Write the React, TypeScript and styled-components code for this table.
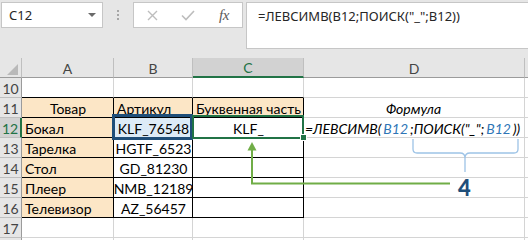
import React from "react";
import styled, { createGlobalStyle, css } from "styled-components";

const CELL_FONT = `Lato, "Liberation Sans", sans-serif`;
const UI_FONT = `"Noto Sans", "Open Sans", sans-serif`;

const GlobalStyle = createGlobalStyle`
  html, body {
    margin: 0;
    padding: 0;
  }
  body {
    width: 528px;
    height: 240px;
    overflow: hidden;
    background: #e6e6e6;
  }
`;

const Window = styled.div`
  width: 528px;
  height: 240px;
  display: flex;
  flex-direction: column;
  background: #e6e6e6;
  overflow: hidden;
`;

/* ---------- formula bar ---------- */

const FormulaBar = styled.div`
  height: 58px;
  flex: none;
  display: flex;
  align-items: flex-start;
  padding: 2px 0 0 1px;
  box-sizing: border-box;
`;

const NameBox = styled.div`
  width: 102px;
  height: 26px;
  box-sizing: border-box;
  background: #fff;
  border: 1px solid #c6c6c6;
  display: flex;
  align-items: center;
  justify-content: space-between;
  padding: 0 6px 0 7px;
  font: 13px ${UI_FONT};
  color: #262626;
`;

const DropArrow = styled.span`
  width: 0;
  height: 0;
  border-left: 4px solid transparent;
  border-right: 4px solid transparent;
  border-top: 4px solid #6a6a6a;
`;

const Grip = styled.div`
  width: 30px;
  height: 26px;
  display: flex;
  flex-direction: column;
  align-items: center;
  justify-content: center;
  gap: 2px;

  span {
    width: 2px;
    height: 2px;
    background: #a6a6a6;
  }
`;

const FxBox = styled.div`
  width: 110px;
  height: 26px;
  box-sizing: border-box;
  background: #fff;
  border: 1px solid #c6c6c6;
  display: grid;
  grid-template-columns: repeat(3, 36px);
  align-items: center;
  justify-items: center;
  margin-right: 3px;
`;

const FxLabel = styled.span`
  font: italic 15px "Liberation Serif", serif;
  color: #5a5a5a;
  letter-spacing: -0.5px;
`;

const FormulaInput = styled.div`
  flex: 1;
  height: 47px;
  box-sizing: border-box;
  background: #fff;
  border: 1px solid #c6c6c6;
  border-right: none;
  padding: 4px 0 0 11px;
  font: 13px/18px ${UI_FONT};
  color: #262626;
  white-space: nowrap;
`;

/* ---------- sheet grid ---------- */

const Grid = styled.div`
  position: relative;
  display: grid;
  grid-template-columns: 22px 92px 79px 111px 221px 1fr;
  grid-auto-rows: 20px;
  background: #fff;
`;

const Corner = styled.div`
  position: relative;
  background: #e6e6e6;
  border-right: 1px solid #bfbfbf;
  border-bottom: 1px solid #9b9b9b;
  box-sizing: border-box;

  &::after {
    content: "";
    position: absolute;
    right: 3px;
    bottom: 2px;
    width: 0;
    height: 0;
    border-left: 11px solid transparent;
    border-bottom: 11px solid #b9b9b9;
  }
`;

const ColHead = styled.div<{ $active?: boolean }>`
  box-sizing: border-box;
  display: flex;
  align-items: center;
  justify-content: center;
  padding-top: 1px;
  background: ${(p) => (p.$active ? "#d2d2d2" : "#e6e6e6")};
  border-right: 1px solid #bfbfbf;
  border-bottom: ${(p) => (p.$active ? "2px solid #217346" : "1px solid #9b9b9b")};
  color: ${(p) => (p.$active ? "#217346" : "#444")};
  font: 14px ${CELL_FONT};
`;

const RowHead = styled.div<{ $active?: boolean }>`
  box-sizing: border-box;
  display: flex;
  align-items: center;
  justify-content: center;
  padding-top: 1px;
  background: ${(p) => (p.$active ? "#d2d2d2" : "#e6e6e6")};
  border-right: ${(p) => (p.$active ? "2px solid #217346" : "1px solid #9b9b9b")};
  border-bottom: 1px solid #bfbfbf;
  color: ${(p) => (p.$active ? "#217346" : "#444")};
  font: 14px ${CELL_FONT};
`;

type Mark = "ref" | "active";

const Cell = styled.div<{
  $fill?: string;
  $center?: boolean;
  $ruled?: boolean;
  $ruleBelow?: boolean;
  $italic?: boolean;
  $mark?: Mark;
}>`
  position: relative;
  box-sizing: border-box;
  display: flex;
  align-items: center;
  justify-content: ${(p) => (p.$center ? "center" : "flex-start")};
  padding: 2px 2px 0 ${(p) => (p.$italic ? "1px" : "3px")};
  background: ${(p) => p.$fill ?? "#fff"};
  border-right: 1px solid ${(p) => (p.$ruled ? "#000" : "#d4d4d4")};
  border-bottom: 1px solid ${(p) => (p.$ruled || p.$ruleBelow ? "#000" : "#d4d4d4")};
  font: ${(p) => (p.$italic ? "italic " : "")}14px ${CELL_FONT};
  color: #000;
  white-space: nowrap;
  z-index: ${(p) => (p.$mark ? 2 : p.$italic ? 1 : 0)};

  ${(p) =>
    p.$mark === "ref" &&
    css`
      &::after {
        content: "";
        position: absolute;
        left: -2px;
        right: -1px;
        top: -4px;
        bottom: -3px;
        border: 3px solid #1f4e79;
      }
    `}

  ${(p) =>
    p.$mark === "active" &&
    css`
      &::after {
        content: "";
        position: absolute;
        left: -1px;
        right: -1px;
        top: -3px;
        bottom: -2px;
        border: 2px solid #217346;
      }
      &::before {
        content: "";
        position: absolute;
        right: -4px;
        bottom: -4px;
        width: 5px;
        height: 5px;
        background: #217346;
        border: 1px solid #fff;
        z-index: 1;
      }
    `}
`;

const Ref = styled.span`
  color: #2e75b6;
  margin: 0 2px;
`;

const Callout = styled.div`
  position: absolute;
  left: 458px;
  top: 116px;
  font: 900 22px ${CELL_FONT};
  color: #1f4e79;
`;

const Annotations = styled.svg`
  position: absolute;
  inset: 0;
  pointer-events: none;
  z-index: 3;
`;

/* ---------- data ---------- */

const BEIGE = "#fce6c6";
const LIGHT_BLUE = "#ddebf7";

type Row = {
  n: number;
  label?: boolean;
  item?: string;
  code?: string;
  part?: string;
  note?: React.ReactNode;
};

const formula = (
  <>
    =ЛЕВСИМВ(<Ref>B12</Ref>;ПОИСК("_";<Ref>B12</Ref>))
  </>
);

const rows: Row[] = [
  { n: 10 },
  { n: 11, item: "Товар", code: "Артикул", part: "Буквенная часть", note: "Формула" },
  { n: 12, item: "Бокал", code: "KLF_76548", part: "KLF_", note: formula },
  { n: 13, item: "Тарелка", code: "HGTF_6523" },
  { n: 14, item: "Стол", code: "GD_81230" },
  { n: 15, item: "Плеер", code: "NMB_12189" },
  { n: 16, item: "Телевизор", code: "AZ_56457" },
  { n: 17 },
  { n: 18, label: false },
];

const inTable = (n: number) => n >= 11 && n <= 16;

export default function App() {
  return (
    <>
      <GlobalStyle />
      <Window>
        <FormulaBar>
          <NameBox>
            C12
            <DropArrow />
          </NameBox>
          <Grip>
            <span />
            <span />
            <span />
          </Grip>
          <FxBox>
            <svg width="11" height="11" viewBox="0 0 11 11">
              <path d="M1 1L10 10M10 1L1 10" stroke="#bdbdbd" strokeWidth="1.4" />
            </svg>
            <svg width="14" height="11" viewBox="0 0 14 11">
              <path d="M1 5.5L5 9.5L13 1" stroke="#bdbdbd" strokeWidth="1.6" fill="none" />
            </svg>
            <FxLabel>fx</FxLabel>
          </FxBox>
          <FormulaInput>=ЛЕВСИМВ(B12;ПОИСК("_";B12))</FormulaInput>
        </FormulaBar>

        <Grid>
          <Corner />
          <ColHead>A</ColHead>
          <ColHead>B</ColHead>
          <ColHead $active>C</ColHead>
          <ColHead>D</ColHead>
          <ColHead />

          {rows.map((r) => {
            const t = inTable(r.n);
            const above = r.n === 10;
            return (
              <React.Fragment key={r.n}>
                <RowHead $active={r.n === 12}>{r.label === false ? null : r.n}</RowHead>
                <Cell $ruled={t} $ruleBelow={above} $fill={t ? BEIGE : undefined} $center={r.n === 11}>
                  {r.item}
                </Cell>
                <Cell
                  $ruled={t}
                  $ruleBelow={above}
                  $center={r.n !== 11}
                  $fill={r.n === 11 ? BEIGE : r.n === 12 ? LIGHT_BLUE : undefined}
                  $mark={r.n === 12 ? "ref" : undefined}
                >
                  {r.code}
                </Cell>
                <Cell
                  $ruled={t}
                  $ruleBelow={above}
                  $center={r.n === 12}
                  $fill={r.n === 11 ? BEIGE : undefined}
                  $mark={r.n === 12 ? "active" : undefined}
                >
                  {r.part}
                </Cell>
                <Cell $italic={!!r.note} $center={r.n === 11}>
                  {r.note}
                </Cell>
                <Cell />
              </React.Fragment>
            );
          })}

          <Annotations width="528" height="182" viewBox="0 0 528 182">
            {/* brace under the ПОИСК part */}
            <path
              d="M413 81V91Q413 95 417 95H460Q465 95 465 100V114M465 100Q465 95 470 95H514Q518 95 518 91V81"
              stroke="#9dc3e6"
              strokeWidth="1.3"
              fill="none"
            />
            {/* arrow from the result cell */}
            <path d="M252 91V125.5H450" stroke="#70ad47" strokeWidth="2" fill="none" />
            <path d="M252 84L247.5 92.5H256.5Z" fill="#70ad47" />
          </Annotations>
          <Callout>4</Callout>
        </Grid>
      </Window>
    </>
  );
}
